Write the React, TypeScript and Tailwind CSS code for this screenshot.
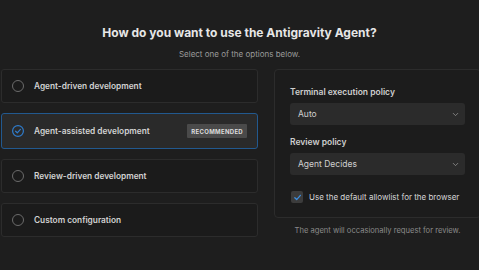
import { ChevronDown } from 'lucide-react';

const options = [
  { label: 'Agent-driven development' },
  { label: 'Agent-assisted development', selected: true, badge: 'RECOMMENDED' },
  { label: 'Review-driven development' },
  { label: 'Custom configuration' },
];

const Radio = ({ selected }: { selected?: boolean }) =>
  selected ? (
    <svg width="12" height="12" viewBox="0 0 12 12" className="shrink-0">
      <circle cx="6" cy="6" r="5.4" fill="none" stroke="#2f7ccc" strokeWidth="1.2" />
      <path d="M3.6 6.2 L5.3 7.8 L8.4 4.4" fill="none" stroke="#2f7ccc" strokeWidth="1.2" strokeLinecap="round" strokeLinejoin="round" />
    </svg>
  ) : (
    <span className="h-[12px] w-[12px] shrink-0 rounded-full border border-[#6b6b6b]"></span>
  );

const Select = ({ value }: { value: string }) => (
  <div className="flex h-[22px] items-center justify-between rounded-[3px] bg-[#2b2b2b] pl-[8px] pr-[5px] text-[8.5px] text-[#cfcfcf]">
    <span>{value}</span>
    <ChevronDown size={9} strokeWidth={2} className="text-[#9a9a9a]" />
  </div>
);

export default function App() {
  return (
    <div
      className="h-[270px] w-[479px] overflow-hidden bg-[#1e1e1e]"
      style={{ fontFamily: 'Inter, "Liberation Sans", sans-serif' }}
    >
      <div className="flex flex-col items-center pt-[24px]">
        <h1 className="text-[12px] font-bold leading-[17px] text-[#e6e6e6]">
          How do you want to use the Antigravity Agent?
        </h1>
        <p className="mt-[7px] text-[8px] leading-[12px] text-[#9a9a9a]">Select one of the options below.</p>
      </div>

      <div className="mt-[9px] flex w-[482px] gap-[16px] pl-[1px]">
        <div className="flex w-[257px] shrink-0 flex-col gap-[10px]">
          {options.map((o) => (
            <div
              key={o.label}
              className={
                o.selected
                  ? 'flex h-[36px] items-center gap-[10px] rounded-[3px] border border-[#22598f] bg-[#2a2a2a] pl-[10px] pr-[10px]'
                  : 'flex h-[34px] items-center gap-[10px] rounded-[3px] border border-[#2c2c2c] bg-[#1b1b1b] pl-[10px] pr-[10px]'
              }
            >
              <Radio selected={o.selected} />
              <span className="text-[8.3px] font-semibold text-[#d2d2d2]">{o.label}</span>
              {o.badge && (
                <span className="ml-auto flex h-[14px] items-center rounded-[1px] bg-[#4a4a4a] px-[4px] text-[6px] font-bold tracking-[0.3px] text-[#dcdcdc]">
                  {o.badge}
                </span>
              )}
            </div>
          ))}
        </div>

        <div className="flex w-[207px] shrink-0 flex-col">
          <div className="rounded-[4px] border border-[#2c2c2c] bg-[#1c1c1c] px-[15px] pb-[14px] pt-[16px]">
            <div className="text-[8.5px] font-semibold leading-[12px] text-[#cfcfcf]">Terminal execution policy</div>
            <div className="mt-[5px]">
              <Select value="Auto" />
            </div>
            <div className="mt-[11px] text-[8.5px] font-semibold leading-[12px] text-[#cfcfcf]">Review policy</div>
            <div className="mt-[5px]">
              <Select value="Agent Decides" />
            </div>
            <div className="mt-[16px] flex items-center gap-[6px] pl-[1px]">
              <span className="flex h-[12px] w-[12px] shrink-0 items-center justify-center rounded-[2px] bg-[#3c3c3c]">
                <svg width="9" height="9" viewBox="0 0 10 10">
                  <path d="M2 5.2 L4.1 7.3 L8.2 2.6" fill="none" stroke="#3d8fe0" strokeWidth="1.4" strokeLinecap="round" strokeLinejoin="round" />
                </svg>
              </span>
              <span className="whitespace-nowrap text-[8px] leading-[12px] text-[#d6d6d6]">Use the default allowlist for the browser</span>
            </div>
          </div>
          <p className="mt-[7px] text-center text-[7.6px] text-[#8a8a8a]">The agent will occasionally request for review.</p>
        </div>
      </div>
    </div>
  );
}
